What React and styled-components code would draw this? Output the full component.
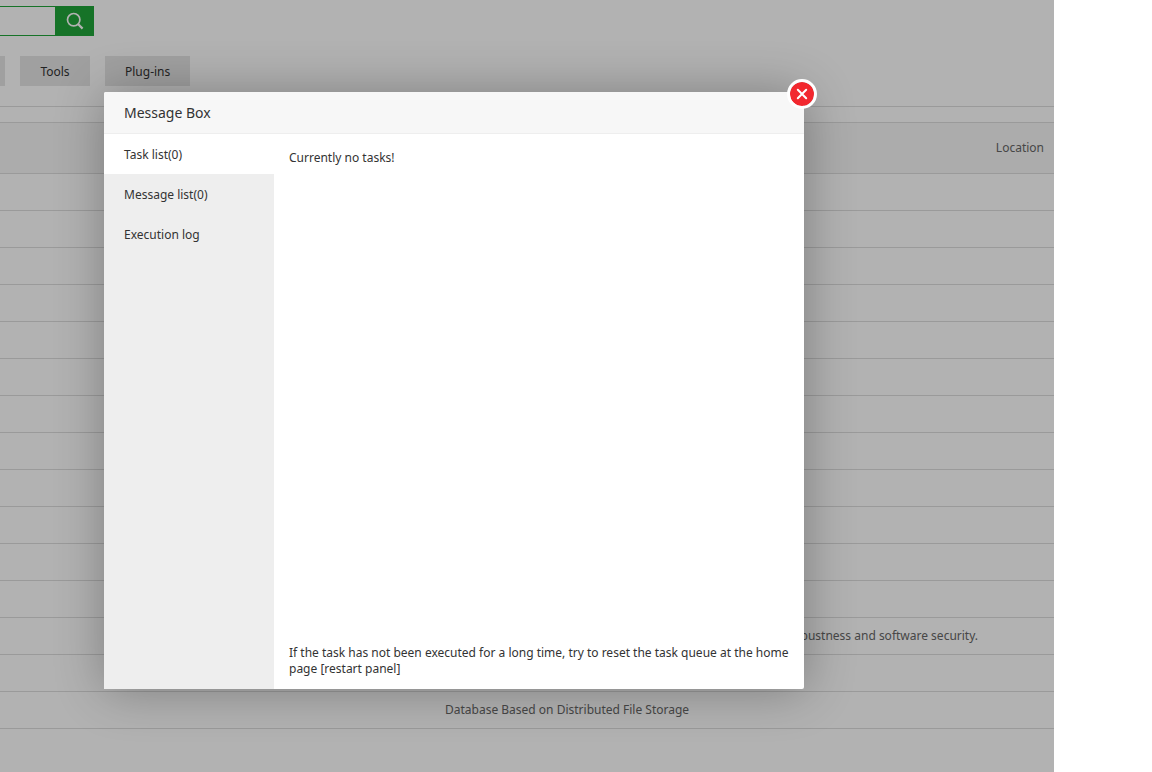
import styled, { createGlobalStyle } from 'styled-components';

const rows = [
    '', '', '', '', '', '', '', '', '', '', '', '',
    'Pure-FTPd is a free FTP server software focusing on program robustness and software security.',
    '',
    'Database Based on Distributed File Storage',
];

const tabs = ['Task list(0)', 'Message list(0)', 'Execution log'];

const App = () => {
    return (
        <StyledStage>
            <GlobalStyle />
            <StyledPage>
                <StyledSearch>
                    <StyledSearchInput type='text' aria-label='Search' />
                    <StyledSearchButton aria-label='Search'>
                        <svg width='18' height='18' viewBox='0 0 18 18' fill='none' stroke='#fff' strokeWidth='1.7'>
                            <circle cx='7.7' cy='7.7' r='6.2' />
                            <path d='M12 12 16.6 16.6' strokeWidth='2.2' />
                        </svg>
                    </StyledSearchButton>
                </StyledSearch>
                <StyledCategories>
                    <StyledCategoryEdge aria-label='Previous category' />
                    <StyledCategory>Tools</StyledCategory>
                    <StyledCategory>Plug-ins</StyledCategory>
                </StyledCategories>
                <StyledTable>
                    <thead>
                        <tr>
                            <th></th>
                            <th></th>
                            <th>Location</th>
                        </tr>
                    </thead>
                    <tbody>
                        {rows.map((text, i) => (
                            <tr key={i}>
                                <td></td>
                                <td>{text}</td>
                                <td></td>
                            </tr>
                        ))}
                    </tbody>
                </StyledTable>
            </StyledPage>
            <StyledOverlay>
                <StyledModal role='dialog' aria-labelledby='box-title'>
                    <StyledClose aria-label='Close'>
                        <svg width='12' height='12' viewBox='0 0 12 12' fill='none' stroke='#fff' strokeWidth='2' strokeLinecap='round'>
                            <path d='M1.8 1.8 10.2 10.2M10.2 1.8 1.8 10.2' />
                        </svg>
                    </StyledClose>
                    <StyledTitle id='box-title'>Message Box</StyledTitle>
                    <StyledBody>
                        <StyledTabs>
                            {tabs.map((tab, i) => (
                                <StyledTab key={tab} $active={i === 0}>{tab}</StyledTab>
                            ))}
                        </StyledTabs>
                        <StyledContent>
                            <p>Currently no tasks!</p>
                            <p>If the task has not been executed for a long time, try to reset the task queue at the home page [restart panel]</p>
                        </StyledContent>
                    </StyledBody>
                </StyledModal>
            </StyledOverlay>
        </StyledStage>
    );
}

const GlobalStyle = createGlobalStyle`
    * {
        box-sizing: border-box;
    }

    body {
        margin: 0;
        background: #fff;
        color: #333;
        font-family: 'Noto Sans', 'Open Sans', sans-serif;
        font-size: 12px;
        line-height: 16px;
    }

    button, input {
        border: none;
        padding: 0;
        color: inherit;
        font: inherit;
    }

    p, h2 {
        margin: 0;
    }
`;

const StyledStage = styled.div`
    position: relative;
    min-height: 100vh;
    margin-right: 98px;
`;

const StyledPage = styled.main`
    padding-top: 6px;
`;

const StyledSearch = styled.div`
    display: flex;
    height: 30px;
`;

const StyledSearchInput = styled.input`
    width: 55px;
    border: 1px solid #20a53a;
    border-width: 1px 0;
    background: #fff;
`;

const StyledSearchButton = styled.button`
    display: flex;
    align-items: center;
    justify-content: center;
    width: 39px;
    background: #20a53a;
`;

const StyledCategories = styled.div`
    display: flex;
    gap: 15px;
    padding: 20px 0;
    border-bottom: 1px solid #ddd;
`;

const StyledCategory = styled.button`
    min-width: 70px;
    height: 30px;
    padding: 2px 20px 0;
    background: #e6e6e6;
`;

const StyledCategoryEdge = styled(StyledCategory)`
    min-width: 5px;
    padding: 0;
`;

const StyledTable = styled.table`
    width: 100%;
    margin-top: 15px;
    border-collapse: collapse;
    border-top: 1px solid #ddd;
    color: #666;
    table-layout: fixed;

    th, td {
        height: 37px;
        padding: 0 10px;
        border-bottom: 1px solid #ddd;
        font-weight: 400;
        text-align: left;
        white-space: nowrap;
    }

    th {
        height: 51px;
        background: #f6f6f6;
    }

    th:first-child {
        width: 435px;
    }

    th:last-child {
        width: 69px;
        text-align: right;
    }
`;

const StyledOverlay = styled.div`
    position: absolute;
    inset: 0;
    padding: 92px 0 0 104px;
    background: rgba(0, 0, 0, 0.3);
`;

const StyledModal = styled.section`
    position: relative;
    width: 700px;
    max-width: 100%;
    border-radius: 2px;
    background: #fff;
    box-shadow: 1px 1px 50px rgba(0, 0, 0, 0.3);
`;

const StyledClose = styled.button`
    position: absolute;
    top: -13px;
    right: -13px;
    display: flex;
    align-items: center;
    justify-content: center;
    width: 30px;
    height: 30px;
    border: 3px solid #fff;
    border-radius: 50%;
    background: #f2282f;
    background-clip: padding-box;
`;

const StyledTitle = styled.h2`
    padding: 0 20px;
    border-bottom: 1px solid #eee;
    border-radius: 2px 2px 0 0;
    background: #f7f7f7;
    font-size: 14px;
    font-weight: 400;
    line-height: 41px;
`;

const StyledBody = styled.div`
    display: flex;
    min-height: 555px;
`;

const StyledTabs = styled.nav`
    display: flex;
    flex-direction: column;
    flex: none;
    width: 170px;
    background: #eee;
`;

const StyledTab = styled.button`
    height: 40px;
    padding: 2px 20px 0;
    background: ${({ $active }) => ($active ? '#fff' : 'transparent')};
    text-align: left;
`;

const StyledContent = styled.div`
    display: flex;
    flex: 1;
    flex-direction: column;
    justify-content: space-between;
    padding: 16px 0 12px 15px;
`;

export default App
